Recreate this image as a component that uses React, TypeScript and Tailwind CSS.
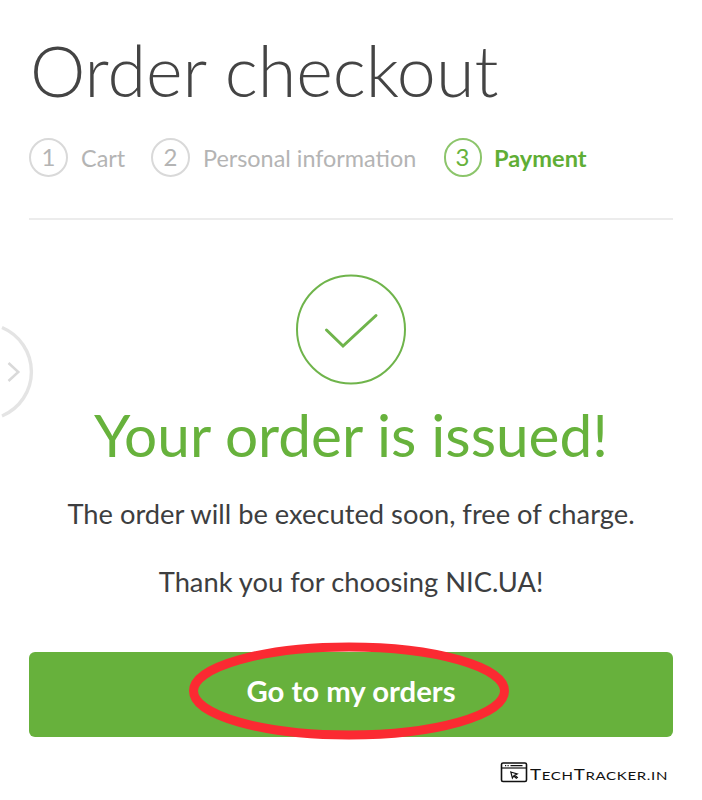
import React from "react";

function Step({ n, label, active = false, className = "" }: { n: number; label: string; active?: boolean; className?: string }) {
  return (
    <li className={`flex items-center ${className}`}>
      <span
        className={`flex h-[39px] shrink-0 justify-center rounded-full border-2 text-[24px] leading-[33px] ${
          active ? "w-[38px] border-[#8cc56b] pr-px text-[#67b23c]" : "w-[39px] border-[#d9d9d9] text-[#b4b4b4]"
        }`}
      >
        {n}
      </span>
      <span
        className={`whitespace-nowrap leading-[30px] ${
          active ? "ml-[12px] text-[23.6px] font-bold text-[#5fae35]" : "ml-[13px] text-[23.4px] text-[#b4b4b4]"
        }`}
      >
        {label}
      </span>
    </li>
  );
}

function SuccessMark() {
  return (
    <svg className="h-[110px] w-[110px] overflow-visible" viewBox="0 0 110 110" fill="none" stroke="#6fb44b">
      <circle cx="55" cy="54.5" r="54" strokeWidth="2" />
      <path d="M30.5 55 L47 71 L80 40.5" strokeWidth="3" strokeLinecap="round" />
    </svg>
  );
}

function DrawerHandle() {
  return (
    <svg className="absolute left-0 top-[320px] h-[104px] w-[36px]" viewBox="0 0 36 104" fill="none">
      <path d="M2 7.5 A48 48 0 0 1 2 96" stroke="#e4e4e4" strokeWidth="3.4" />
      <path d="M8.5 43 L18.3 52 L8.5 61" stroke="#d9d9d9" strokeWidth="2.5" />
    </svg>
  );
}

function Brand() {
  return (
    <div className="flex items-center text-[#111]">
      <svg className="h-[21px] w-[28px]" viewBox="0 0 28 21" fill="none" stroke="currentColor">
        <rect x="1.5" y="1" width="25" height="18.5" rx="1.5" strokeWidth="1.6" />
        <path d="M1.5 6H26.5" strokeWidth="1.2" />
        <path d="M5 3.6h1.2M7.5 3.6h1.2M10.5 3.6h12" strokeWidth="1.2" />
        <path d="M10.8 10 L17.2 12 L14.8 13.2 L17.4 15.4 L16.3 16.3 L13.8 14 L12.4 16 Z" strokeWidth="1.2" />
      </svg>
      <span className="ml-[2px] mt-[5px] inline-block origin-left scale-x-[1.25] whitespace-nowrap text-[12px] leading-[18px] tracking-[0.54px]">
        <span className="text-[15px]">T</span>ECH<span className="text-[15px]">T</span>RACKER.IN
      </span>
    </div>
  );
}

export default function App() {
  return (
    <main className="relative h-[800px] w-[702px] overflow-hidden bg-white px-[29px] pt-[30px] font-['Lato',sans-serif] text-[#3d3e40]">
      <h1 className="ml-[1px] h-[80px] whitespace-nowrap text-[70px] font-light leading-[80px] text-[#444]">Order checkout</h1>
      <ol className="mt-[28px] flex h-[39px] items-center">
        <Step n={1} label="Cart" className="w-[122px]" />
        <Step n={2} label="Personal information" className="w-[293px]" />
        <Step n={3} label="Payment" active />
      </ol>
      <hr className="mt-[41px] w-[644px] border-0 border-t-2 border-[#ececec]" />
      <section className="flex w-[644px] flex-col items-center pt-[55px]">
        <SuccessMark />
        <h2 className="mt-[14px] whitespace-nowrap text-[58.5px] leading-[70px] text-[#67b23c]">Your order is issued!</h2>
        <p className="mt-[29px] whitespace-nowrap text-[27.3px] leading-[32px]">The order will be executed soon, free of charge.</p>
        <p className="mt-[36px] whitespace-nowrap text-[27.3px] leading-[32px]">Thank you for choosing NIC.UA!</p>
        <div className="relative mt-[54px] w-full">
          <button className="block h-[85px] w-full rounded-[6px] bg-[#67b13c] pb-[7px] text-[29.3px] font-bold leading-[36px] text-white">Go to my orders</button>
          <svg className="pointer-events-none absolute left-[157px] top-[-13px] h-[104px] w-[326px]" viewBox="0 0 326 104" fill="none">
            <ellipse cx="163" cy="52" rx="155.5" ry="44" stroke="#fb2a32" strokeWidth="9" />
          </svg>
        </div>
      </section>
      <footer className="ml-[471px] mt-[23px]">
        <Brand />
      </footer>
      <DrawerHandle />
    </main>
  );
}
